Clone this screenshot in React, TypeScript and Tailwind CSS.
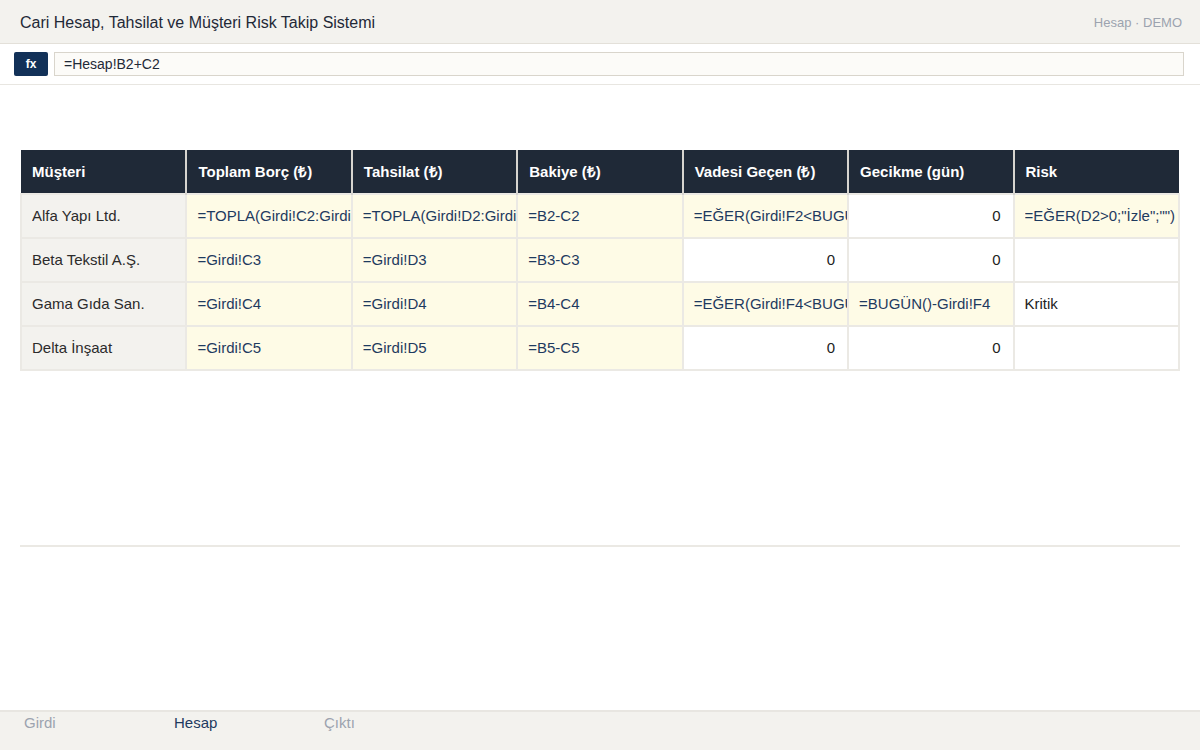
import React from "react";

type Cell = { v: string; kind: "label" | "formula" | "num" | "text" | "empty" };

const headers = ["Müşteri", "Toplam Borç (₺)", "Tahsilat (₺)", "Bakiye (₺)", "Vadesi Geçen (₺)", "Gecikme (gün)", "Risk"];

const rows: Cell[][] = [
  [
    { v: "Alfa Yapı Ltd.", kind: "label" },
    { v: "=TOPLA(Girdi!C2:Girdi!C2)", kind: "formula" },
    { v: "=TOPLA(Girdi!D2:Girdi!D2)", kind: "formula" },
    { v: "=B2-C2", kind: "formula" },
    { v: "=EĞER(Girdi!F2<BUGÜN();B2;0)", kind: "formula" },
    { v: "0", kind: "num" },
    { v: '=EĞER(D2>0;"İzle";"")', kind: "formula" },
  ],
  [
    { v: "Beta Tekstil A.Ş.", kind: "label" },
    { v: "=Girdi!C3", kind: "formula" },
    { v: "=Girdi!D3", kind: "formula" },
    { v: "=B3-C3", kind: "formula" },
    { v: "0", kind: "num" },
    { v: "0", kind: "num" },
    { v: "", kind: "empty" },
  ],
  [
    { v: "Gama Gıda San.", kind: "label" },
    { v: "=Girdi!C4", kind: "formula" },
    { v: "=Girdi!D4", kind: "formula" },
    { v: "=B4-C4", kind: "formula" },
    { v: "=EĞER(Girdi!F4<BUGÜN();B4;0)", kind: "formula" },
    { v: "=BUGÜN()-Girdi!F4", kind: "formula" },
    { v: "Kritik", kind: "text" },
  ],
  [
    { v: "Delta İnşaat", kind: "label" },
    { v: "=Girdi!C5", kind: "formula" },
    { v: "=Girdi!D5", kind: "formula" },
    { v: "=B5-C5", kind: "formula" },
    { v: "0", kind: "num" },
    { v: "0", kind: "num" },
    { v: "", kind: "empty" },
  ],
];

function cellClass(kind: Cell["kind"]): string {
  switch (kind) {
    case "label":
      return "bg-[#f3f2ee] text-[#2b2b2b] text-left";
    case "formula":
      return "bg-[#fefbe6] text-[#1e3a5f] text-left";
    case "num":
      return "bg-white text-[#222222] text-right";
    case "text":
      return "bg-white text-[#222222] text-left";
    default:
      return "bg-white";
  }
}

export default function App() {
  return (
    <div
      className="w-[1200px] h-[750px] flex flex-col bg-white overflow-hidden"
      style={{ fontFamily: '"Liberation Sans", Arial, sans-serif' }}
    >
      {/* Title bar */}
      <div className="h-[44px] flex items-center justify-between px-5 bg-[#f3f2ee] border-b border-[#e3e0d9] shrink-0">
        <div className="text-[16px] text-[#1f2937] pt-[2px]">Cari Hesap, Tahsilat ve Müşteri Risk Takip Sistemi</div>
        <div className="text-[13px] text-[#9ca3af] mr-[-2px] pt-[2px]">Hesap · DEMO</div>
      </div>

      {/* Formula bar */}
      <div className="h-[41px] flex items-center gap-[6px] pl-[14px] pr-[16px] bg-white border-b border-[#e8e6e1] shrink-0">
        <div className="w-[34px] h-[24px] rounded-[2px] bg-[#123158] text-white text-[12px] font-bold flex items-center justify-center">
          fx
        </div>
        <div className="flex-1 h-[24px] border border-[#d9d5cc] bg-[#fcfbf8] flex items-center px-[9px] text-[14px] text-[#1f2937]">
          =Hesap!B2+C2
        </div>
      </div>

      {/* Main */}
      <div className="flex-1 px-5 pt-[65px]">
        <table className="w-full table-fixed border-collapse">
          <thead>
            <tr>
              {headers.map((h) => (
                <th
                  key={h}
                  className="h-[44px] bg-[#1f2937] text-white text-left font-semibold text-[15px] pl-[11px] pr-3 pt-[2px] border-x-2 border-x-[#d6d4cf] first:border-l-0 last:border-r-0 border-y-0"
                >
                  {h}
                </th>
              ))}
            </tr>
          </thead>
          <tbody>
            {rows.map((r, i) => (
              <tr key={i}>
                {r.map((c, j) => (
                  <td
                    key={j}
                    className={`h-[44px] pl-[10px] pr-3 pt-[1px] text-[15px] border-2 border-[#ebe9e4] whitespace-nowrap overflow-hidden ${cellClass(c.kind)}`}
                  >
                    <div className={`overflow-hidden whitespace-nowrap ${c.kind === "formula" ? "mr-[-12px]" : ""}`}>{c.v}</div>
                  </td>
                ))}
              </tr>
            ))}
          </tbody>
        </table>
        <div className="mt-[174px] border-t-2 border-[#ebe9e4]" />
      </div>

      {/* Sheet tabs */}
      <div className="h-[40px] shrink-0 bg-[#f3f2ee] border-t-2 border-[#e8e6e1] flex items-start">
        <div className="w-[150px] pl-6 text-[15px] text-[#9ca3af]">Girdi</div>
        <div className="w-[150px] pl-6 text-[15px] text-[#1e3a5f]">Hesap</div>
        <div className="w-[150px] pl-6 text-[15px] text-[#9ca3af]">Çıktı</div>
      </div>
    </div>
  );
}
